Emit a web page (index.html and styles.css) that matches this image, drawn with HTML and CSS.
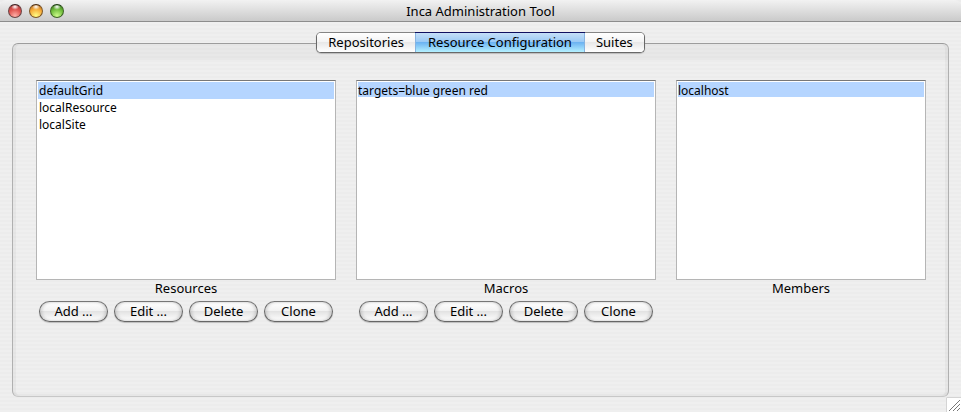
FILE: index.html
```html
<!DOCTYPE html>
<html lang="en">
<head>
<meta charset="utf-8">
<title>Inca Administration Tool</title>
<link rel="stylesheet" href="styles.css">
</head>
<body>
<header class="titlebar">
  <div class="lights">
    <button class="light red" aria-label="Close"></button>
    <button class="light amber" aria-label="Minimize"></button>
    <button class="light green" aria-label="Zoom"></button>
  </div>
  <h1 class="title">Inca Administration Tool</h1>
</header>
<main class="content">
  <div class="tabs" role="tablist">
    <button class="tab" role="tab" aria-selected="false">Repositories</button>
    <button class="tab active" role="tab" aria-selected="true">Resource Configuration</button>
    <button class="tab" role="tab" aria-selected="false">Suites</button>
  </div>
  <section class="panel">
    <div class="column">
      <select class="list roomy" id="resources" size="10">
        <option selected>defaultGrid</option>
        <option>localResource</option>
        <option>localSite</option>
      </select>
      <label class="caption" for="resources">Resources</label>
      <div class="actions">
        <button class="push">Add ...</button>
        <button class="push">Edit ...</button>
        <button class="push">Delete</button>
        <button class="push">Clone</button>
      </div>
    </div>
    <div class="column">
      <select class="list" id="macros" size="10">
        <option selected>targets=blue green red</option>
      </select>
      <label class="caption" for="macros">Macros</label>
      <div class="actions">
        <button class="push">Add ...</button>
        <button class="push">Edit ...</button>
        <button class="push">Delete</button>
        <button class="push">Clone</button>
      </div>
    </div>
    <div class="column">
      <select class="list" id="members" size="10">
        <option selected>localhost</option>
      </select>
      <label class="caption" for="members">Members</label>
    </div>
  </section>
</main>
<svg class="grip" viewBox="0 0 15 15" aria-hidden="true">
  <path class="grip-box" d="M0 0H15V15H0Z"/>
  <path class="grip-edge" d="M.5 15V.5H15"/>
  <path class="grip-line" d="M3 14L14 3M7 14L14 7M11 14L14 11"/>
</svg>
</body>
</html>
```
FILE: styles.css
```css
* {
  box-sizing: border-box;
}

body {
  margin: 0;
  min-height: 100vh;
  display: flex;
  flex-direction: column;
  font: 13px/16px "Lucida Grande", "Noto Sans", "Open Sans", sans-serif;
  color: #000;
  background: repeating-linear-gradient(#ececec 0 2px, #efefef 2px 4px);
}

button,
select {
  font: inherit;
  color: inherit;
  margin: 0;
  padding: 0;
}

.titlebar {
  display: grid;
  grid-template-columns: 1fr auto 1fr;
  align-items: center;
  height: 22px;
  padding: 0 8px;
  border-bottom: 1px solid #8c8c8c;
  border-radius: 6px 6px 0 0;
  background: linear-gradient(#f2f2f2, #dedede 50%, #cacaca);
}

.lights {
  display: flex;
  gap: 7px;
}

.light {
  width: 14px;
  height: 14px;
  border: 1px solid #6b4444;
  border-top-color: #3c2020;
  border-radius: 50%;
}

.red {
  background: radial-gradient(ellipse 4px 3px at 50% 15%, #fff, #fff0),
    radial-gradient(circle at 50% 90%, #ffb0a8, #e25a55 50%, #a32626);
}

.amber {
  border-color: #7d5725;
  border-top-color: #4a2b10;
  background: radial-gradient(ellipse 4px 3px at 50% 15%, #fff, #fff0),
    radial-gradient(circle at 50% 90%, #ffff86, #f6ac3a 55%, #ae5d14);
}

.green {
  border-color: #3e6424;
  border-top-color: #1c3b10;
  background: radial-gradient(ellipse 4px 3px at 50% 15%, #fff, #fff0),
    radial-gradient(circle at 50% 90%, #cdfb8c, #70bd3c 55%, #2c6d16);
}

.title {
  margin: 0;
  font-size: 13px;
  font-weight: 400;
}

.content {
  flex: 1;
  display: flex;
  flex-direction: column;
  padding: 10px 12px 15px;
}

.tabs {
  align-self: center;
  display: flex;
  height: 21px;
  margin-bottom: -10px;
  z-index: 1;
  border: 1px solid #686868;
  border-top-color: #858585;
  border-radius: 5px;
  box-shadow: 0 1px 1px #bbb;
  background: #fff;
}

.tab {
  padding: 0 11px 2px;
  border: 0;
  border-radius: 4px;
  background: linear-gradient(#fff, #f4f4f4 45%, #e8e8e8 50%, #fff);
}

.tab.active {
  padding: 0 12px 2px;
  border: solid #86b3e0;
  border-width: 0 1px;
  border-radius: 0;
  background: linear-gradient(#c5dff8, #9bcaf5 45%, #6cb3f2 50%, #b4f0ff);
  box-shadow: 0 -1px #101060;
}

.panel {
  flex: 1;
  display: grid;
  grid-template-columns: 6fr 6fr 5fr;
  align-items: start;
  gap: 20px;
  padding: 36px 22px 0 23px;
  border: 1px solid #b0b0b0;
  border-top-color: #9c9c9c;
  border-bottom-color: #c8c8c8;
  border-radius: 6px;
  background: linear-gradient(#00000008, #00000008) top / 100% 16px no-repeat;
  box-shadow: inset 3px 0 #00000008, inset -3px 0 #00000008, inset 0 -2px #00000008;
}

.column {
  display: flex;
  flex-direction: column;
  min-width: 0;
}

.list {
  height: 200px;
  padding: 1px 0;
  border: 1px solid #b5b5b5;
  border-top-color: #777;
  border-radius: 0;
  outline: 0;
  overflow: hidden;
  background: #fff;
  font-size: 12px;
}

.list option {
  height: 15px;
  min-height: 0;
  margin: 0 1px;
  padding: 0;
  line-height: 14px;
  color: #000;
}

.list.roomy option {
  height: 17px;
  padding: 0 1px;
  line-height: 18px;
}

.list option:checked {
  background: #b5d5ff linear-gradient(#b5d5ff, #b5d5ff);
}

.caption {
  align-self: center;
  height: 21px;
}

.actions {
  display: flex;
  gap: 6px;
  padding: 0 3px;
}

.push {
  flex: 1;
  height: 21px;
  padding-bottom: 2px;
  border: 1px solid #666;
  border-top-color: #777;
  border-radius: 11px;
  background: linear-gradient(#fff, #f2f2f2 45%, #e3e3e3 50%, #fff);
  box-shadow: 0 1px 1px #bbb, inset 2px 0 3px #0002, inset -2px 0 3px #0002;
}

.grip {
  position: fixed;
  right: 0;
  bottom: 0;
  width: 15px;
  height: 15px;
}

.grip-box {
  fill: #fff;
}

.grip-edge {
  fill: none;
  stroke: #d4d4d4;
}

.grip-line {
  fill: none;
  stroke: #777;
}
```
